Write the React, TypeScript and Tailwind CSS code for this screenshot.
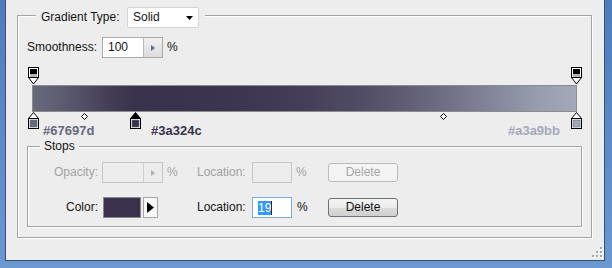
import React from "react";

function TopStop() {
  return (
    <svg width="11" height="18" viewBox="0 0 11 18">
      <rect x="0.5" y="0.5" width="10" height="10" fill="#fff" stroke="#000" />
      <rect x="2" y="2" width="7" height="5" fill="#000" />
      <rect x="2" y="7" width="7" height="3" fill="#b4b4b4" />
      <path d="M0.5 10.5 L5.5 17 L10.5 10.5 Z" fill="#fff" stroke="#000" />
    </svg>
  );
}

function ColorStop({ color, selected }: { color: string; selected?: boolean }) {
  return (
    <svg width="11" height="17" viewBox="0 0 11 17">
      <path d="M5.5 0.5 L10.5 6.5 L0.5 6.5 Z" fill={selected ? "#000" : "#fff"} stroke="#000" />
      <rect x="0.5" y="6.5" width="10" height="10" fill="#fff" stroke="#000" />
      <rect x="2" y="8" width="7" height="7" fill={color} stroke="#6a6a6a" strokeWidth="0.6" />
    </svg>
  );
}

function Diamond() {
  return (
    <svg width="7" height="7" viewBox="0 0 7 7">
      <path d="M3.5 0.5 L6.5 3.5 L3.5 6.5 L0.5 3.5 Z" fill="#fff" stroke="#000" />
    </svg>
  );
}

function Spinner({ disabled }: { disabled?: boolean }) {
  return (
    <div
      className={
        "w-[19px] h-full flex items-center justify-center border-l " +
        (disabled
          ? "border-[#cfcfcf] bg-[#ececec]"
          : "border-[#b8b8b8] bg-[linear-gradient(180deg,#f0f0f0,#dcdcdc)]")
      }
    >
      <svg width="4" height="6" viewBox="0 0 4 6">
        <path d="M0 0 L4 3 L0 6 Z" fill={disabled ? "#b0b0b0" : "#5a6e94"} />
      </svg>
    </div>
  );
}

function GripDots() {
  const dots: [number, number][] = [
    [8, 0],
    [4, 4],
    [8, 4],
    [0, 8],
    [4, 8],
    [8, 8],
  ];
  return (
    <svg width="11" height="11" viewBox="0 0 11 11">
      {dots.map(([x, y], i) => (
        <g key={i}>
          <rect x={x + 1} y={y + 1} width="2" height="2" fill="#fff" />
          <rect x={x} y={y} width="2" height="2" fill="#a6a6a6" />
        </g>
      ))}
    </svg>
  );
}

export default function App() {
  return (
    <div className="w-[612px] h-[268px] bg-[linear-gradient(180deg,#4c7cbc,#6a98d1)] font-['Liberation_Sans',Arial,sans-serif] text-[12px] leading-[15px] text-[#141414]">
      <div className="relative ml-[5px] mr-[7px] h-[261px] border-l border-r border-b border-[#34517a] bg-[#ededed] flex flex-col">
        {/* Outer group */}
        <div className="ml-[11px] mr-[12px] mt-[15px] border border-[#a3a3a3] shadow-[1px_1px_0_#fff,inset_1px_1px_0_#fff] flex flex-col pb-[10px]">
          {/* Header legend */}
          <div className="ml-[18px] mt-[-9px] self-start bg-[#ededed] pl-[5px] pr-[6px] flex items-center h-[21px]">
            <span className="w-[86px]">Gradient Type:</span>
            <div className="w-[72px] h-[21px] border border-[#d4d4d4] rounded-[2px] bg-white flex items-center justify-between pl-[5px] pr-[5px]">
              <span>Solid</span>
              <svg width="7" height="4" viewBox="0 0 7 4">
                <path d="M0 0 L7 0 L3.5 4 Z" fill="#000" />
              </svg>
            </div>
          </div>

          {/* Smoothness */}
          <div className="ml-[9px] mt-[9px] h-[21px] flex items-center">
            <span className="w-[75px]">Smoothness:</span>
            <div className="w-[61px] h-[21px] border border-[#a9a9a9] bg-white flex items-center">
              <span className="flex-1 pl-[5px]">100</span>
              <Spinner />
            </div>
            <span className="ml-[4px]">%</span>
          </div>

          {/* Gradient editor */}
          <div className="relative mx-[9px] mt-[6px] h-[76px]">
            <div className="absolute left-[1px] top-[3px]">
              <TopStop />
            </div>
            <div className="absolute left-[544px] top-[3px]">
              <TopStop />
            </div>
            <div className="ml-[5px] mt-[21px] w-[545px] h-[27px] border border-[#8c8c8c] bg-[linear-gradient(to_right,#67697d_0%,#5e5e73_4.75%,#514e65_9.5%,#433d56_14.25%,#3a324c_19%,#3b334d_27.1%,#3d354f_35.2%,#403953_43.3%,#47405a_51.4%,#504b64_59.5%,#5e5b72_67.6%,#6f6e84_75.7%,#828398_83.8%,#959aac_91.9%,#a3a9bb_100%)]" />
            <div className="absolute left-[1px] top-[48px]">
              <ColorStop color="#67697d" />
            </div>
            <div className="absolute left-[103px] top-[48px]">
              <ColorStop color="#3a324c" selected />
            </div>
            <div className="absolute left-[544px] top-[48px]">
              <ColorStop color="#a3a9bb" />
            </div>
            <div className="absolute left-[54px] top-[49px] leading-none">
              <Diamond />
            </div>
            <div className="absolute left-[413px] top-[49px] leading-none">
              <Diamond />
            </div>
            <span className="absolute left-[16px] top-[59px] text-[13px] font-bold text-[#67697d]">#67697d</span>
            <span className="absolute left-[124px] top-[59px] text-[13px] font-bold text-[#3a324c]">#3a324c</span>
            <span className="absolute right-[22px] top-[59px] text-[13px] font-bold text-[#a3a9bb]">#a3a9bb</span>
          </div>

          {/* Stops group */}
          <div className="mx-[9px] mt-[6px] border border-[#a3a3a3] shadow-[1px_1px_0_#fff,inset_1px_1px_0_#fff] flex flex-col pb-[8px]">
            <div className="ml-[12px] mt-[-8px] self-start bg-[#ededed] px-[4px] h-[15px]">Stops</div>

            {/* Opacity row (disabled) */}
            <div className="mt-[8px] h-[21px] flex items-center text-[#a2a2a2]">
              <span className="w-[70px] text-right">Opacity:</span>
              <div className="ml-[4px] w-[61px] h-[21px] border border-[#c6c6c6] bg-[#ededed] flex items-center">
                <span className="flex-1" />
                <Spinner disabled />
              </div>
              <span className="w-[34px] pl-[4px]">%</span>
              <span className="w-[55px]">Location:</span>
              <div className="w-[40px] h-[21px] border border-[#c6c6c6] bg-[#ededed]" />
              <span className="w-[36px] pl-[4px]">%</span>
              <div className="w-[70px] h-[19px] border border-[#b9bcbf] rounded-[3px] bg-[#f4f4f4] flex items-center justify-center text-[#a6a6a6]">
                Delete
              </div>
            </div>

            {/* Color row */}
            <div className="mt-[14px] h-[21px] flex items-center">
              <span className="w-[70px] text-right">Color:</span>
              <div className="ml-[5px] w-[38px] h-[21px] border border-[#8a8a8a] bg-[#3a324c]" />
              <div className="ml-[2px] w-[15px] h-[21px] border border-[#a6a6a6] bg-[#f8f8f8] flex items-center justify-center">
                <svg width="7" height="11" viewBox="0 0 7 11">
                  <path d="M0 0 L7 5.5 L0 11 Z" fill="#000" />
                </svg>
              </div>
              <span className="w-[39px]" />
              <span className="w-[55px]">Location:</span>
              <div className="w-[40px] h-[21px] border border-[#7eaad8] bg-white flex items-center pl-[5px]">
                <span className="bg-[#3399ff] text-white leading-[14px]">19</span>
                <span className="w-[1px] h-[14px] bg-[#3b2a10]" />
              </div>
              <span className="w-[36px] pl-[5px]">%</span>
              <div className="w-[70px] h-[19px] border border-[#707070] rounded-[3px] bg-[linear-gradient(180deg,#f4f4f4_0%,#ebebeb_50%,#dcdcdc_51%,#cfcfcf_100%)] flex items-center justify-center text-[#111]">
                Delete
              </div>
            </div>
          </div>
        </div>

        {/* resize grip */}
        <div className="absolute right-[1px] bottom-[2px] leading-none">
          <GripDots />
        </div>
      </div>
    </div>
  );
}
